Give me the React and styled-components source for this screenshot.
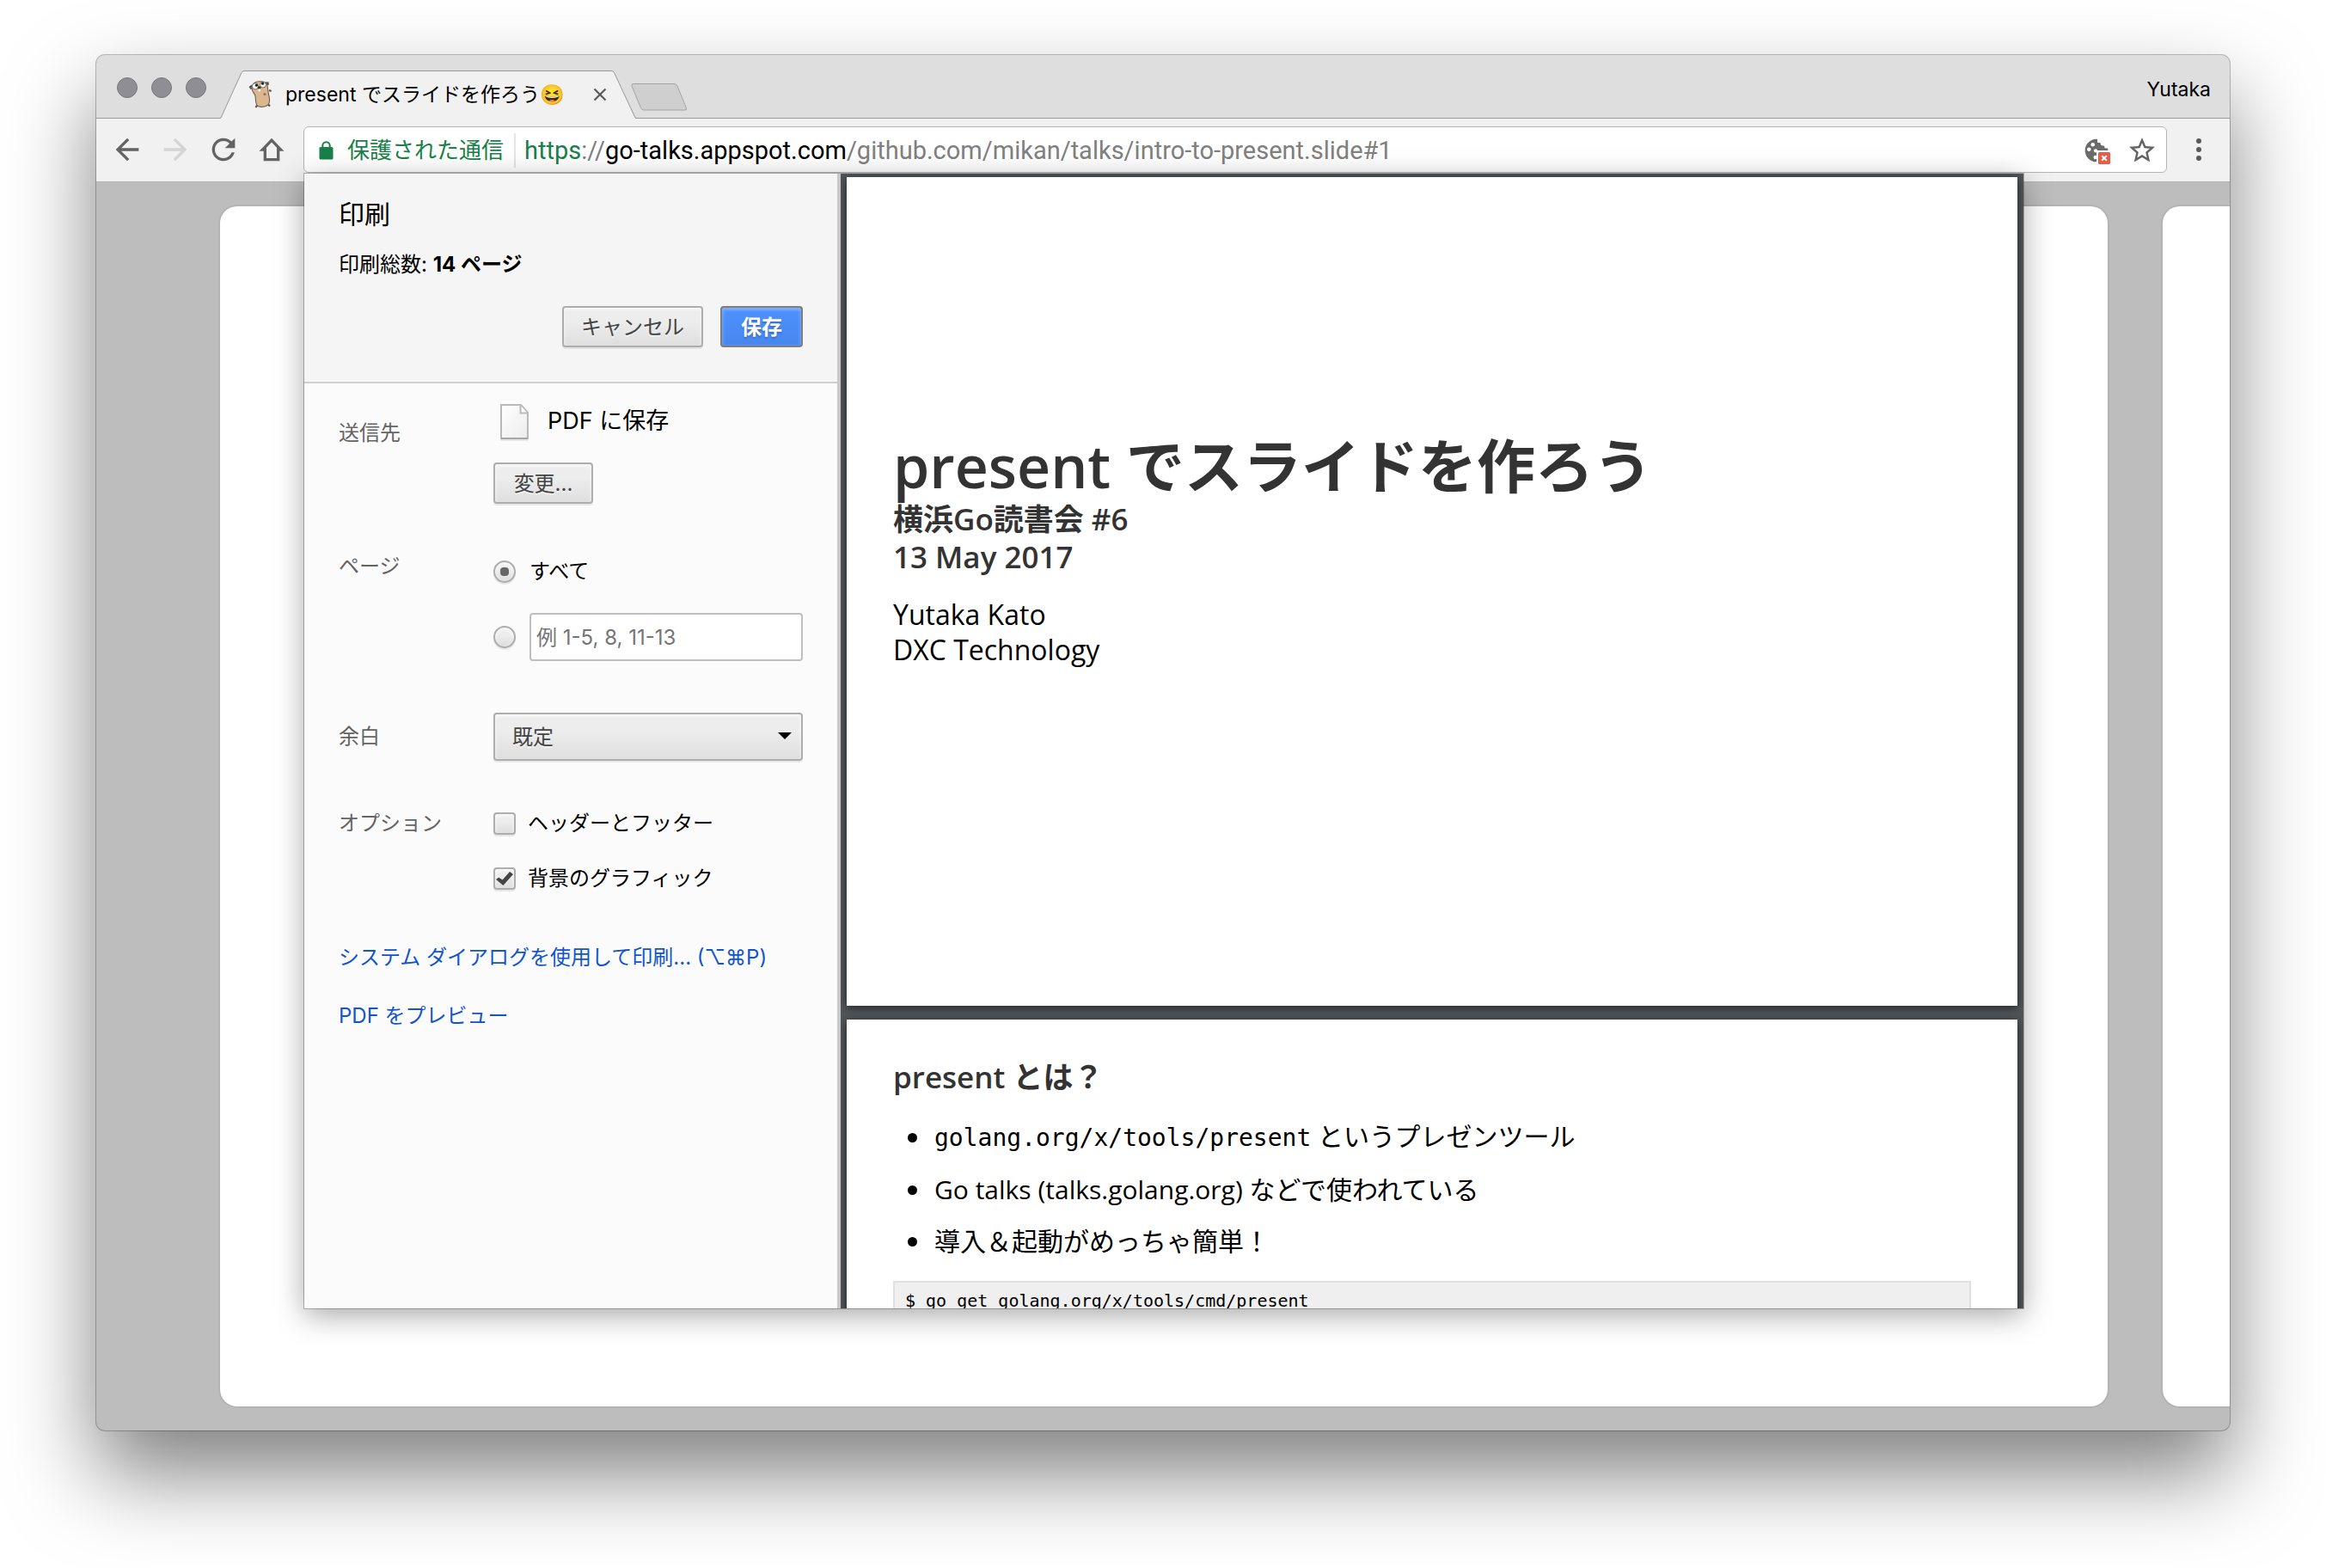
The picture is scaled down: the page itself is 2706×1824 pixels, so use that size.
import React, { useState } from "react";
import styled, { createGlobalStyle, css } from "styled-components";

const uiFont = `"Inter", "Noto Sans CJK JP", sans-serif`;
const slideFont = `"Open Sans", "Noto Sans CJK JP", sans-serif`;
const codeFont = `"DejaVu Sans Mono", "Noto Sans CJK JP", monospace`;

const GlobalStyle = createGlobalStyle`
  *, *::before, *::after { box-sizing: border-box; }
  body { margin: 0; background: #fff; font-family: ${uiFont}; color: #000; }
  button, input, select { font-family: inherit; margin: 0; }
  h1, h2, h3, p, ul, pre { margin: 0; padding: 0; }
`;

/* ---------- browser window ---------- */

const Desktop = styled.div`
  display: flex;
  min-height: 100vh;
  padding: 64px 112px 160px;
`;

const BrowserWindow = styled.div`
  position: relative;
  display: flex;
  flex: 1;
  flex-direction: column;
  border-radius: 10px;
  overflow: hidden;
  background: #bdbdbd;
  box-shadow: 0 0 0 1px rgba(0, 0, 0, 0.25), 0 50px 100px rgba(0, 0, 0, 0.5);
`;

const TabStrip = styled.header`
  display: flex;
  align-items: flex-end;
  height: 74px;
  background: #dedede;
  box-shadow: inset 0 -1px #9b9b9b;
`;

const TrafficLights = styled.div`
  display: flex;
  gap: 16px;
  padding: 0 16px 24px 24px;
`;

const TrafficLight = styled.button`
  width: 24px;
  height: 24px;
  padding: 0;
  border: 1px solid #78777c;
  border-radius: 50%;
  background: #8f8e94;
`;

const Tab = styled.div`
  position: relative;
  display: flex;
  align-items: center;
  width: 484px;
  height: 56px;
  padding: 0 30px 0 32px;
`;

const TabShape = styled.svg`
  position: absolute;
  inset: 0;
`;

const TabTitle = styled.span`
  position: relative;
  margin-left: 12px;
  font-size: 23px;
  line-height: 32px;
  white-space: nowrap;
`;

const Favicon = styled.svg`
  position: relative;
  flex: none;
`;

const IconButton = styled.button`
  position: relative;
  display: flex;
  flex: none;
  align-items: center;
  justify-content: center;
  width: ${(p) => p.$size}px;
  height: ${(p) => p.$size}px;
  padding: 0;
  border: 0;
  background: none;
  color: ${(p) => (p.disabled ? "#d4d4d4" : "#636363")};
`;

const TabClose = styled(IconButton)`
  margin-left: auto;
`;

const NewTab = styled.button`
  display: flex;
  margin: 0 0 9px -6px;
  padding: 0;
  border: 0;
  background: none;
`;

const Profile = styled.button`
  margin-left: auto;
  padding: 0 22px 18px;
  border: 0;
  background: none;
  font-size: 23px;
  line-height: 32px;
  color: #000;
`;

const Toolbar = styled.nav`
  display: flex;
  align-items: center;
  height: 74px;
  padding: 0 16px 2px;
  background: #f1f1f1;
  box-shadow: inset 0 -1px #b3b3b3;
`;

const NavButtons = styled.div`
  display: flex;
  gap: 16px;
  margin-right: 17px;
`;

const Omnibox = styled.div`
  display: flex;
  flex: 1;
  align-items: center;
  height: 54px;
  margin-right: 17px;
  padding: 2px 10px 0 17px;
  border: 1px solid #b4b4b4;
  border-radius: 6px;
  background: #fff;
  line-height: 36px;
  white-space: nowrap;
`;

const Secure = styled.span`
  margin: 0 12px 0 16px;
  font-size: 26px;
  color: #188048;
`;

const Divider = styled.span`
  width: 2px;
  height: 40px;
  margin-right: 10px;
  background: #e5e5e5;
`;

const Address = styled.span`
  flex: 1;
  font-family: "Roboto", sans-serif;
  font-size: 29px;
  color: #808080;
`;

const Scheme = styled.span`
  color: #188048;
`;

const Host = styled.span`
  color: #000;
`;

const OmniboxActions = styled.div`
  display: flex;
  align-items: center;
  gap: 16px;
`;

/* ---------- slide deck behind the dialog ---------- */

const Deck = styled.main`
  display: flex;
  flex: 1;
  gap: 64px;
  padding: 28px 0 28px 144px;
`;

const BackSlide = styled.div`
  flex: ${(p) => (p.$next ? "0 0 78px" : "1")};
  border-radius: ${(p) => (p.$next ? "20px 0 0 20px" : "20px")};
  background: #fff;
  box-shadow: 0 0 0 2px #b3b3b3;
`;

/* ---------- print dialog ---------- */

const PrintDialog = styled.section`
  position: absolute;
  inset: 138px 240px 142px 242px;
  display: flex;
  background: #fbfbfb;
  box-shadow: 0 0 0 1px rgba(0, 0, 0, 0.25), 0 8px 32px rgba(0, 0, 0, 0.35);
`;

const Settings = styled.form`
  flex: none;
  width: 624px;
  border-right: 4px solid #c8c8c8;
`;

const SettingsHeader = styled.div`
  padding: 29px 40px 40px;
  border-bottom: 2px solid #cfcfcf;
  background: #f5f5f5;
`;

const Heading = styled.h1`
  font-size: 30px;
  font-weight: 400;
  line-height: 36px;
`;

const Summary = styled.p`
  margin-top: 25px;
  font-size: 24px;
  line-height: 32px;
`;

const Actions = styled.div`
  display: flex;
  justify-content: flex-end;
  gap: 20px;
  margin-top: 32px;
`;

const raised = css`
  border: 2px solid #adadad;
  border-radius: 4px;
  background: linear-gradient(#ededed, #ededed 38%, #dedede);
  box-shadow: 0 2px 0 rgba(0, 0, 0, 0.08), inset 0 2px 4px rgba(255, 255, 255, 0.75);
  color: #444;
  text-shadow: 0 2px 0 #f0f0f0;
`;

const Button = styled.button`
  min-width: ${(p) => (p.$primary ? 96 : 116)}px;
  height: 48px;
  padding: 1px 20px 0;
  ${raised}
  font-size: 24px;
  line-height: 32px;
  ${(p) =>
    p.$primary &&
    css`
      border-color: #7d7d7d;
      background: linear-gradient(#4d90fe, #4787ed);
      box-shadow: inset 0 2px 4px rgba(255, 255, 255, 0.4);
      color: #fff;
      font-weight: 700;
      text-shadow: 0 2px 2px rgba(0, 0, 0, 0.2);
    `}
`;

const SettingsBody = styled.div`
  padding: 20px 40px;
`;

const Row = styled.div`
  display: grid;
  grid-template-columns: 180px minmax(0, 1fr);
  align-items: ${(p) => (p.$center ? "center" : "start")};
  margin-top: ${(p) => p.$before || 0}px;
`;

const RowLabel = styled.label`
  padding-top: ${(p) => p.$drop || 0}px;
  font-size: 24px;
  line-height: 32px;
  color: #646464;
`;

const Controls = styled.div`
  display: flex;
  flex-direction: column;
  align-items: flex-start;
  gap: ${(p) => p.$gap || 32}px;
  padding-top: ${(p) => p.$drop || 0}px;
`;

const Destination = styled.div`
  display: flex;
  align-items: center;
  gap: 15px;
  font-size: 27px;
  line-height: 36px;
`;

const Choice = styled.div`
  display: flex;
  align-items: center;
  gap: ${(p) => p.$gap}px;
  align-self: stretch;
  font-size: 24px;
  line-height: 32px;
`;

const Tick = styled.input`
  display: grid;
  flex: none;
  place-content: center;
  width: 26px;
  height: 26px;
  appearance: none;
  ${raised}
  border-radius: ${(p) => (p.type === "radio" ? "50%" : "4px")};

  &:checked::after {
    content: "";
    background: ${(p) => (p.type === "radio" ? "#666" : "#444")};
    ${(p) =>
      p.type === "radio"
        ? css`
            width: 10px;
            height: 10px;
            border-radius: 4px;
          `
        : css`
            width: 20px;
            height: 16px;
            clip-path: polygon(0 56%, 16% 42%, 38% 60%, 80% 0, 100% 18%, 42% 100%);
          `}
  }
`;

const RangeInput = styled.input`
  flex: 1;
  min-width: 0;
  height: 56px;
  padding: 0 6px;
  border: 2px solid #bfbfbf;
  border-radius: 4px;
  background: #fff;
  font-size: 24px;

  &::placeholder {
    color: #757575;
    opacity: 1;
  }
`;

const SelectBox = styled.div`
  position: relative;

  &::after {
    content: "";
    position: absolute;
    top: 23px;
    right: 13px;
    border: 8px solid transparent;
    border-top-color: #000;
    border-bottom: 0;
    pointer-events: none;
  }
`;

const Select = styled.select`
  display: block;
  width: 100%;
  height: 56px;
  padding: 0 20px;
  appearance: none;
  ${raised}
  font-size: 24px;
`;

const Links = styled.div`
  display: flex;
  flex-direction: column;
  align-items: flex-start;
  gap: 36px;
  margin-top: 60px;
`;

const Link = styled.a`
  font-size: 24px;
  line-height: 32px;
  color: #1155cc;
  text-decoration: none;
  white-space: nowrap;
`;

/* ---------- preview pages ---------- */

const Preview = styled.div`
  display: flex;
  flex: 1;
  flex-direction: column;
  gap: 16px;
  padding: 4px 7px 0;
  overflow: hidden;
  background: #525659;
`;

const Page = styled.article`
  flex: none;
  min-height: 964px;
  padding: ${(p) => (p.$cover ? 300 : 45)}px 54px 0;
  background: #fff;
  box-shadow: 0 2px 10px rgba(0, 0, 0, 0.6);
  font-family: ${slideFont};
`;

const Title = styled.h1`
  margin-bottom: 4px;
  font-size: 68px;
  font-weight: 600;
  line-height: 72px;
  color: #333;
`;

const Subtitle = styled.h2`
  font-size: 35px;
  font-weight: 600;
  line-height: 44px;
  color: #333;
`;

const Author = styled.div`
  margin-top: 24px;
  font-size: 32px;
  line-height: 41px;
`;

const Bullets = styled.ul`
  margin: 17px 0 16px;
  list-style: none;
`;

const Bullet = styled.li`
  display: flex;
  align-items: center;
  gap: 20px;
  padding-left: 17px;
  font-size: 30px;
  line-height: 60px;

  &::before {
    content: "";
    width: 11px;
    height: 11px;
    border-radius: 50%;
    background: #000;
  }
`;

const Code = styled.code`
  font-family: ${codeFont};
  font-size: 28px;
`;

const CodeBlock = styled.pre`
  padding: 9px 12px;
  border: 2px solid #e0e0e0;
  background: #efefef;
  font-family: ${codeFont};
  font-size: 20px;
  line-height: 24px;
`;

/* ---------- icons ---------- */

const Glyph = ({ d, size = 40 }) => (
  <svg width={size} height={size} viewBox="0 0 24 24" fill="currentColor" aria-hidden="true">
    <path d={d} />
  </svg>
);

const BACK = "M20 11H7.83l5.59-5.59L12 4l-8 8 8 8 1.41-1.41L7.83 13H20v-2z";
const FORWARD = "M12 4l-1.41 1.41L16.17 11H4v2h12.17l-5.58 5.59L12 20l8-8z";
const RELOAD =
  "M17.65 6.35C16.2 4.9 14.21 4 12 4c-4.42 0-7.99 3.58-7.99 8s3.57 8 7.99 8c3.73 0 6.84-2.55 7.73-6h-2.08c-.82 2.33-3.04 4-5.65 4-3.31 0-6-2.69-6-6s2.69-6 6-6c1.66 0 3.14.69 4.22 1.78L13 11h7V4l-2.35 2.35z";
const STAR =
  "M22 9.24l-7.19-.62L12 2 9.19 8.63 2 9.24l5.46 4.73L5.82 21 12 17.27 18.18 21l-1.63-7.03L22 9.24zM12 15.4l-3.76 2.27 1-4.28-3.32-2.88 4.38-.38L12 6.1l1.71 4.04 4.38.38-3.32 2.88 1 4.28L12 15.4z";

const HomeIcon = () => (
  <svg width="40" height="40" viewBox="0 0 24 24" fill="none" stroke="currentColor" strokeWidth="2" aria-hidden="true">
    <path d="M12 5.5L5.7 12H7.4V19H16.6V12H18.3Z" />
  </svg>
);

const MenuIcon = () => (
  <svg width="40" height="40" viewBox="0 0 40 40" fill="#5a5a5a" aria-hidden="true">
    <circle cx="20" cy="10" r="3" />
    <circle cx="20" cy="20" r="3" />
    <circle cx="20" cy="30" r="3" />
  </svg>
);

const LockIcon = () => (
  <svg width="17" height="22" viewBox="0 0 17 22" aria-hidden="true">
    <rect x="0.5" y="7" width="16" height="14.5" rx="1.6" fill="#188048" />
    <path d="M4.3 8V5.4a4.2 4.2 0 0 1 8.4 0V8" fill="none" stroke="#188048" strokeWidth="2" />
  </svg>
);

const CookieIcon = () => (
  <svg width="32" height="32" viewBox="-1 -2 32 32" aria-hidden="true">
    <path
      d="M15 .8A13.3 13.3 0 1 0 27.3 14V11.4Q25.6 11.9 23.6 11.2Q23.4 9 22.6 8.4Q20.6 9 19 7.4Q18.8 5.4 18 5Q15.6 5.4 15 4.4Z"
      fill="#6a6a6a"
    />
    <g fill="#fff">
      <circle cx="9.7" cy="7.3" r="2.3" />
      <circle cx="5.3" cy="12.7" r="2.3" />
      <circle cx="13" cy="14.3" r="2.1" />
      <circle cx="12.7" cy="22" r="2.2" />
      <rect x="14" y="14" width="18" height="18" />
    </g>
    <rect x="16" y="16" width="14" height="14" rx="1.6" fill="#e75b4b" />
    <path d="M20.2 20.2l5.6 5.6M25.8 20.2l-5.6 5.6" stroke="#fff" strokeWidth="2" />
  </svg>
);

const CloseIcon = () => (
  <svg width="24" height="24" viewBox="0 0 24 24" aria-hidden="true">
    <path d="M5.5 5.5l13 13M18.5 5.5l-13 13" stroke="#5a5a5a" strokeWidth="2.2" />
  </svg>
);

const Gopher = () => (
  <Favicon width="32" height="32" viewBox="0 0 32 32" aria-hidden="true">
    <path d="M4.5 9.5L3 7.2 5 5.6M21 2.6L23.5 2.4 23.8 5M25 11L27.6 12M11 28.5L9.6 31M24 27.5L26 29.6" stroke="#55504a" strokeWidth="2.2" fill="none" />
    <path
      d="M5 8C5.4 3.6 9 .8 13 .8C18 .4 22 1.6 23 5.6C23.8 9.4 23.6 12 24.6 16C25.8 20.6 26 25 24.4 27.4C22 30.4 14.6 31.4 11.4 29C9 26.4 9.6 21 9 17.6C8.2 14 4.6 12.4 5 8Z"
      fill="#dcb68c"
      stroke="#6a5f52"
      strokeWidth="1.1"
    />
    <circle cx="9" cy="6.4" r="3.6" fill="#fff" stroke="#555" strokeWidth=".8" />
    <circle cx="18" cy="4.6" r="3.4" fill="#fff" stroke="#555" strokeWidth=".8" />
    <circle cx="10.4" cy="5.2" r="1.6" fill="#222" />
    <circle cx="17.6" cy="3.2" r="1.6" fill="#222" />
    <ellipse cx="13.6" cy="8" rx="2.1" ry="1.7" fill="#333" />
    <path d="M12.6 9.6h2.4v2.6h-2.4z" fill="#fff" />
    <circle cx="20" cy="15.4" r="1.5" fill="#8d7558" />
  </Favicon>
);

const DocumentIcon = () => (
  <svg width="48" height="48" viewBox="0 0 48 48" aria-hidden="true">
    <defs>
      <linearGradient id="sheet" x1="0" y1="0" x2="1" y2="1">
        <stop offset="0" stopColor="#fff" />
        <stop offset="1" stopColor="#ececec" />
      </linearGradient>
    </defs>
    <path d="M8 46h33" stroke="#e6e6e6" strokeWidth="2" />
    <path d="M9 5H32L40 14V44H9Z" fill="url(#sheet)" stroke="#b9b9b9" strokeWidth="2" strokeLinejoin="round" />
    <path d="M31.5 5.5V14.5H39.5" fill="#fff" stroke="#b9b9b9" strokeWidth="2" />
    <path d="M9 44H40" stroke="#a6a6a6" strokeWidth="2" />
  </svg>
);

/* ---------- page ---------- */

const BrowserChrome = () => (
  <>
    <TabStrip>
      <TrafficLights>
        <TrafficLight type="button" aria-label="閉じる" />
        <TrafficLight type="button" aria-label="最小化" />
        <TrafficLight type="button" aria-label="拡大" />
      </TrafficLights>
      <Tab>
        <TabShape width="484" height="56" viewBox="0 0 484 56" aria-hidden="true">
          <path d="M0 56L1 55L25 2.5Q26 .5 28 .5H455Q457.5 .5 458.5 2.5L483 55L484 56Z" fill="#f1f1f1" />
          <path d="M0 55.5L1 55L25 2.5Q26 .5 28 .5H455Q457.5 .5 458.5 2.5L483 55L484 55.5" fill="none" stroke="#979797" />
        </TabShape>
        <Gopher />
        <TabTitle>present でスライドを作ろう😆</TabTitle>
        <TabClose type="button" $size={24} aria-label="タブを閉じる">
          <CloseIcon />
        </TabClose>
      </Tab>
      <NewTab type="button" aria-label="新しいタブ">
        <svg width="66" height="32" viewBox="0 0 66 32" aria-hidden="true">
          <path d="M3 .5H50Q53 .5 54 3L64.5 29Q65.3 31 63 31H15Q12.5 31 11.5 28.5L1 3Q.2 .5 3 .5Z" fill="#cfcfcf" stroke="#a3a3a3" />
        </svg>
      </NewTab>
      <Profile type="button">Yutaka</Profile>
    </TabStrip>
    <Toolbar>
      <NavButtons>
        <IconButton type="button" $size={40} aria-label="戻る">
          <Glyph d={BACK} />
        </IconButton>
        <IconButton type="button" $size={40} aria-label="進む" disabled>
          <Glyph d={FORWARD} />
        </IconButton>
        <IconButton type="button" $size={40} aria-label="再読み込み">
          <Glyph d={RELOAD} />
        </IconButton>
        <IconButton type="button" $size={40} aria-label="ホーム">
          <HomeIcon />
        </IconButton>
      </NavButtons>
      <Omnibox>
        <LockIcon />
        <Secure>保護された通信</Secure>
        <Divider />
        <Address>
          <Scheme>https</Scheme>://<Host>go-talks.appspot.com</Host>/github.com/mikan/talks/intro-to-present.slide#1
        </Address>
        <OmniboxActions>
          <IconButton type="button" $size={36} aria-label="Cookie">
            <CookieIcon />
          </IconButton>
          <IconButton type="button" $size={36} aria-label="ブックマーク">
            <Glyph d={STAR} size={36} />
          </IconButton>
        </OmniboxActions>
      </Omnibox>
      <IconButton type="button" $size={40} aria-label="メニュー">
        <MenuIcon />
      </IconButton>
    </Toolbar>
  </>
);

const PrintSettings = () => {
  const [scope, setScope] = useState("all");
  const [headers, setHeaders] = useState(false);
  const [graphics, setGraphics] = useState(true);
  return (
    <Settings onSubmit={(e) => e.preventDefault()}>
      <SettingsHeader>
        <Heading>印刷</Heading>
        <Summary>
          印刷総数: <b>14 ページ</b>
        </Summary>
        <Actions>
          <Button type="button">キャンセル</Button>
          <Button type="submit" $primary>
            保存
          </Button>
        </Actions>
      </SettingsHeader>
      <SettingsBody>
        <Row>
          <RowLabel as="span" $drop={22}>送信先</RowLabel>
          <Controls $gap={24}>
            <Destination>
              <DocumentIcon />
              PDF に保存
            </Destination>
            <Button type="button">変更...</Button>
          </Controls>
        </Row>
        <Row $before={57}>
          <RowLabel as="span">ページ</RowLabel>
          <Controls $drop={6}>
            <Choice $gap={16}>
              <Tick type="radio" name="pages" id="pages-all" checked={scope === "all"} onChange={() => setScope("all")} />
              <label htmlFor="pages-all">すべて</label>
            </Choice>
            <Choice $gap={16}>
              <Tick
                type="radio"
                name="pages"
                aria-label="ページ範囲"
                checked={scope === "range"}
                onChange={() => setScope("range")}
              />
              <RangeInput type="text" aria-label="ページ範囲" placeholder="例 1-5, 8, 11-13" />
            </Choice>
          </Controls>
        </Row>
        <Row $before={60} $center>
          <RowLabel htmlFor="margins">余白</RowLabel>
          <SelectBox>
            <Select id="margins" defaultValue="default">
              <option value="default">既定</option>
            </Select>
          </SelectBox>
        </Row>
        <Row $before={57}>
          <RowLabel as="span">オプション</RowLabel>
          <Controls>
            <Choice $gap={14}>
              <Tick type="checkbox" id="headers" checked={headers} onChange={(e) => setHeaders(e.target.checked)} />
              <label htmlFor="headers">ヘッダーとフッター</label>
            </Choice>
            <Choice $gap={14}>
              <Tick type="checkbox" id="graphics" checked={graphics} onChange={(e) => setGraphics(e.target.checked)} />
              <label htmlFor="graphics">背景のグラフィック</label>
            </Choice>
          </Controls>
        </Row>
        <Links>
          <Link href="#system-dialog">システム ダイアログを使用して印刷... (⌥⌘P)</Link>
          <Link href="#preview">PDF をプレビュー</Link>
        </Links>
      </SettingsBody>
    </Settings>
  );
};

const PrintPreview = () => (
  <Preview>
    <Page $cover>
      <Title>present でスライドを作ろう</Title>
      <Subtitle>横浜Go読書会 #6</Subtitle>
      <Subtitle>13 May 2017</Subtitle>
      <Author>
        <p>Yutaka Kato</p>
        <p>DXC Technology</p>
      </Author>
    </Page>
    <Page>
      <Subtitle as="h3">present とは？</Subtitle>
      <Bullets>
        <Bullet>
          <span>
            <Code>golang.org/x/tools/present</Code> というプレゼンツール
          </span>
        </Bullet>
        <Bullet>
          <span>Go talks (talks.golang.org) などで使われている</span>
        </Bullet>
        <Bullet>
          <span>導入＆起動がめっちゃ簡単！</span>
        </Bullet>
      </Bullets>
      <CodeBlock>$ go get golang.org/x/tools/cmd/present</CodeBlock>
    </Page>
  </Preview>
);

export default function App() {
  return (
    <>
      <GlobalStyle />
      <Desktop>
        <BrowserWindow>
          <BrowserChrome />
          <Deck>
            <BackSlide />
            <BackSlide $next />
          </Deck>
          <PrintDialog role="dialog" aria-label="印刷">
            <PrintSettings />
            <PrintPreview />
          </PrintDialog>
        </BrowserWindow>
      </Desktop>
    </>
  );
}
